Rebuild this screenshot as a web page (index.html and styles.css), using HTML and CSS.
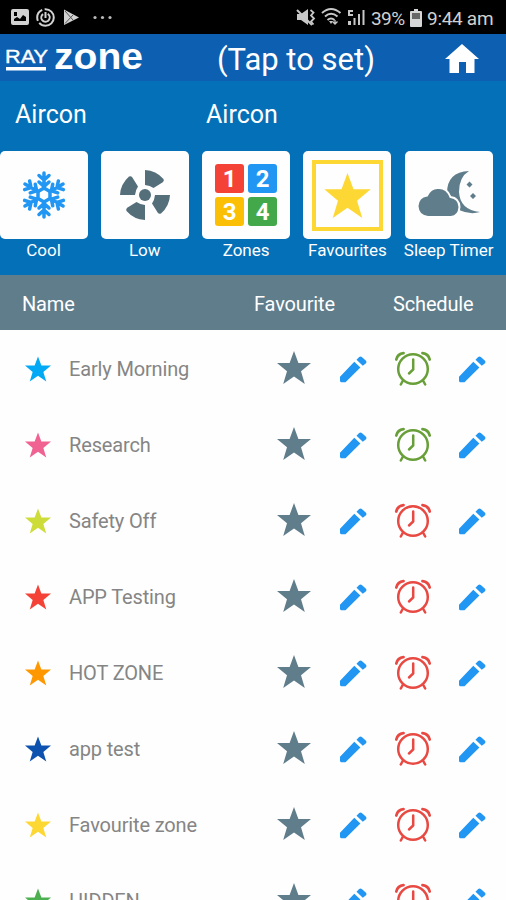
FILE: index.html
```html
<!DOCTYPE html>
<html lang="en">
<head>
<meta charset="utf-8">
<title>RAY zone</title>
<link rel="stylesheet" href="styles.css">
</head>
<body>
<svg class="defs" width="0" height="0">
  <symbol id="star" viewBox="0 0 34 33"><path d="M17 0L21.400 12H34L24 20.300L27.800 33L17 25.400L6.200 33L10 20.300L0 12H12.600Z"/></symbol>
  <symbol id="pencil" viewBox="0 0 27 27"><path d="M0 20.700L14.300 5.800L20.400 11.500L5.500 26.300H1L0 25.300ZM16.500 3.800L19.200 1Q20.500 0 21.800 1L26 4.700Q27 6 26 7.200L22.800 9.700Z"/></symbol>
  <symbol id="alarm" viewBox="0 0 40 40"><g fill="none" stroke="currentColor" stroke-width="2.500" stroke-linecap="round"><circle cx="20" cy="20" r="14.800"/><path d="M20.200 10.500V20.500L16 24.500M10 31.500L7.800 35.500M30 31.500L32.200 35.500"/><path d="M3.300 10.500Q4.500 5 10.500 4.200M36.700 10.500Q35.500 5 29.500 4.200" stroke-width="2.800"/></g></symbol>
</svg>
<div class="status">
  <svg class="s-left" width="130" height="34" viewBox="0 0 130 34">
    <path fill="#d2d2d2" fill-rule="evenodd" d="M13 9h14q2 0 2 2v12q0 2-2 2H13q-2 0-2-2V11q0-2 2-2ZM14 21h12v-4l-3-2-3 4-3-2-3 2ZM14 12v4h3v-4Z"/>
    <g fill="none" stroke="#d2d2d2" stroke-width="2"><circle cx="45.500" cy="17.500" r="8.300" stroke-dasharray="20 2.500 13 2.500"/><circle cx="45.500" cy="17.500" r="4.200" stroke-dasharray="21 6" transform="rotate(-58 45.500 17.500)"/><path d="M45.500 12v6"/></g>
    <path fill="#d2d2d2" d="M64 9.500L79 17.500L64 25Z"/><path d="M65 11L73 20M65 23.500L73 15" stroke="#555" stroke-width="1"/>
    <g fill="#b9b9b9"><circle cx="95" cy="17.500" r="1.600"/><circle cx="102.500" cy="17.500" r="1.600"/><circle cx="110" cy="17.500" r="1.600"/></g>
  </svg>
  <svg class="s-right" width="78" height="34" viewBox="0 0 78 34">
    <g fill="none" stroke="#c8c8c8" stroke-width="2"><path d="M1 10L16 25"/><path d="M14.500 10l3 2.500-2.500 3 3 3-3 3 2.500 3" stroke-width="1.800"/><path d="M26 13Q35 5 44.500 13M29 16.500Q35 11 41.500 16.500M31.500 20Q35 17 38.500 20"/><path d="M39 20v3.500M36.500 21.500l2.500 2.500 2.500-2.500" stroke-width="1.300"/></g>
    <path fill="#c8c8c8" d="M1 14h4l7-5v16l-7-5H1ZM33 21h4l-2 3ZM52 21h3v4h-3ZM57.500 18h2v7h-2ZM62 14h2v11H62ZM66.500 10h2v15h-2ZM52 10h5v2h-3v2h3v2h-5Z"/>
  </svg>
  <span class="pct">39%</span>
  <svg class="batt" width="12" height="18" viewBox="0 0 12 18"><path fill="#d6d6d6" d="M4 0h4v2h3q1 0 1 1v14q0 1-1 1H1q-1 0-1-1V3q0-1 1-1h3Z"/><path fill="#666" d="M2 4h8v6H2Z"/></svg>
  <span class="time">9:44 am</span>
</div>
<header class="bar">
  <svg class="logo" width="150" height="47" viewBox="0 0 150 47">
    <g fill="#fff" font-family="Liberation Sans, sans-serif"><text x="5" y="28" font-size="19" textLength="43" lengthAdjust="spacingAndGlyphs" stroke="#fff" stroke-width=".4">RAY</text><text x="54" y="34" font-size="37" font-weight="700" textLength="89" lengthAdjust="spacingAndGlyphs">zone</text><path d="M6 32h40v3.500H6Z"/></g>
  </svg>
  <h1 class="title">(Tap to set)</h1>
  <svg class="home" width="34" height="30" viewBox="0 0 34 30"><path fill="#fff" d="M17 0L34 15H29.500V29H21V18H14V29H4.500V15H0Z"/></svg>
</header>
<section class="panel">
  <div class="captions"><span class="caption">Aircon</span><span class="caption">Aircon</span></div>
  <div class="tiles">
    <div class="item"><div class="tile">
      <svg width="88" height="88" viewBox="-44 -44 88 88"><g fill="none" stroke="#2196f3" stroke-width="3.500" stroke-linecap="round" stroke-linejoin="round">
        <g id="arm"><path d="M0-7V-22M-5-19.500L0-15L5-19.500M-5-13L0-8.500L5-13"/></g>
        <use href="#arm" transform="rotate(60)"/><use href="#arm" transform="rotate(120)"/><use href="#arm" transform="rotate(180)"/><use href="#arm" transform="rotate(240)"/><use href="#arm" transform="rotate(300)"/><path d="M0-7L6-3.500V3.500L0 7L-6 3.500V-3.500Z"/></g></svg>
    </div><span class="label cool">Cool</span></div>
    <div class="item"><div class="tile">
      <svg width="88" height="88" viewBox="-44 -44 88 88"><g fill="#546e7a"><circle r="6"/><path id="blade" d="M0-25Q11-24.500 18.500-16Q19.500-14 17.800-12.800L8.500-7Q5-9.500 0-10Z"/><use href="#blade" transform="rotate(90)"/><use href="#blade" transform="rotate(180)"/><use href="#blade" transform="rotate(270)"/></g></svg>
    </div><span class="label low">Low</span></div>
    <div class="item"><div class="tile"><div class="zones"><b class="red">1</b><b class="blue">2</b><b class="amber">3</b><b class="green">4</b></div></div><span class="label zn">Zones</span></div>
    <div class="item"><div class="tile"><div class="frame"><svg width="47" height="45"><use href="#star"/></svg></div></div><span class="label fav">Favourites</span></div>
    <div class="item"><div class="tile">
      <svg width="88" height="88" viewBox="0 0 88 88"><path fill="#607d8b" d="M64 20Q42 21 42 42L54 59Q65 64 75 61Q55 59 54 41Q54 26 64 20Z"/><path fill="#607d8b" stroke="#fff" stroke-width="2" d="M23 66Q13 65 12.500 55Q13 46 22 44.500Q26 36 34 37Q42 37 45.500 46Q54 47 54.500 56Q54 65 46 66Z"/><path fill="#607d8b" d="M64.500 30.500l3 3-3 3-3-3ZM68 42l3 3-3 3-3-3Z"/></svg>
    </div><span class="label sleep">Sleep Timer</span></div>
  </div>
</section>
<div class="thead"><span class="h-name">Name</span><span class="h-fav">Favourite</span><span class="h-sch">Schedule</span></div>
<main class="list">
  <div class="row"><svg class="mark sky"><use href="#star"/></svg><span class="name">Early Morning</span><svg class="favstar"><use href="#star"/></svg><svg class="pencil"><use href="#pencil"/></svg><svg class="alarm on"><use href="#alarm"/></svg><svg class="pencil"><use href="#pencil"/></svg></div>
  <div class="row"><svg class="mark pink"><use href="#star"/></svg><span class="name">Research</span><svg class="favstar"><use href="#star"/></svg><svg class="pencil"><use href="#pencil"/></svg><svg class="alarm on"><use href="#alarm"/></svg><svg class="pencil"><use href="#pencil"/></svg></div>
  <div class="row"><svg class="mark lime"><use href="#star"/></svg><span class="name">Safety Off</span><svg class="favstar"><use href="#star"/></svg><svg class="pencil"><use href="#pencil"/></svg><svg class="alarm"><use href="#alarm"/></svg><svg class="pencil"><use href="#pencil"/></svg></div>
  <div class="row"><svg class="mark scarlet"><use href="#star"/></svg><span class="name">APP Testing</span><svg class="favstar"><use href="#star"/></svg><svg class="pencil"><use href="#pencil"/></svg><svg class="alarm"><use href="#alarm"/></svg><svg class="pencil"><use href="#pencil"/></svg></div>
  <div class="row"><svg class="mark orange"><use href="#star"/></svg><span class="name">HOT ZONE</span><svg class="favstar"><use href="#star"/></svg><svg class="pencil"><use href="#pencil"/></svg><svg class="alarm"><use href="#alarm"/></svg><svg class="pencil"><use href="#pencil"/></svg></div>
  <div class="row"><svg class="mark navy"><use href="#star"/></svg><span class="name">app test</span><svg class="favstar"><use href="#star"/></svg><svg class="pencil"><use href="#pencil"/></svg><svg class="alarm"><use href="#alarm"/></svg><svg class="pencil"><use href="#pencil"/></svg></div>
  <div class="row"><svg class="mark yellow"><use href="#star"/></svg><span class="name">Favourite zone</span><svg class="favstar"><use href="#star"/></svg><svg class="pencil"><use href="#pencil"/></svg><svg class="alarm"><use href="#alarm"/></svg><svg class="pencil"><use href="#pencil"/></svg></div>
  <div class="row"><svg class="mark leaf"><use href="#star"/></svg><span class="name">HIDDEN</span><svg class="favstar"><use href="#star"/></svg><svg class="pencil"><use href="#pencil"/></svg><svg class="alarm"><use href="#alarm"/></svg><svg class="pencil"><use href="#pencil"/></svg></div>
</main>
</body>
</html>
```
FILE: styles.css
```css
* { box-sizing: border-box; }
body { margin: 0; width: 506px; height: 900px; overflow: hidden; display: flex; flex-direction: column; background: #fefefe; font-family: Roboto, sans-serif; }
svg { display: block; flex: none; }
.defs { display: none; }
.status { height: 34px; flex: none; display: flex; align-items: center; background: #000; color: #d0d0d0; font-size: 19px; white-space: nowrap; }
.s-right { margin-left: 166px; }
.pct { width: 39px; margin-left: -3px; letter-spacing: -.6px; transform: translateY(.5px); }
.batt { margin-top: 1px; }
.time { margin-left: 5px; letter-spacing: -.3px; transform: translateY(.5px); }
.bar { height: 47px; flex: none; display: flex; background: #0d5fb2; color: #fff; }
.logo { margin-top: 1px; }
.title { margin: 0; width: 228px; padding-left: 67px; font-size: 31px; line-height: 52px; font-weight: 400; white-space: nowrap; }
.home { margin: 9.500px 0 0 67px; }
.panel { height: 194px; flex: none; background: #0470b8; color: #fff; }
.captions { display: grid; grid-template-columns: 191px 1fr; padding-left: 15px; height: 70px; line-height: 67px; font-size: 25px; }
.tiles { display: flex; gap: 13.300px; margin-left: -.5px; }
.item { width: 88px; display: flex; flex-direction: column; align-items: center; }
.tile { width: 88px; height: 88px; border-radius: 5px; background: #fefefe; display: flex; align-items: center; justify-content: center; }
.label { font-size: 17px; line-height: 23px; white-space: nowrap; }
.zones { display: grid; grid-template-columns: 29px 29px; gap: 4px; }
.zones b { height: 29px; border-radius: 3px; text-align: center; font-size: 24px; line-height: 30px; }
.red { background: #f44336; }
.blue { background: #2196f3; }
.amber { background: #fbc005; }
.green { background: #43a84a; }
.frame { width: 71px; height: 71px; border: 4px solid #fdd835; color: #fdd835; fill: currentColor; display: flex; align-items: center; justify-content: center; }
.thead { height: 55px; flex: none; display: grid; grid-template-columns: 232px 139px 1fr; padding-left: 22px; line-height: 58px; background: #607d8b; color: #fff; font-size: 20px; letter-spacing: -.15px; }
.list { padding-top: 1px; }
.row { height: 76px; display: grid; grid-template-columns: 44px 208px 62.500px 53.500px 66px 27px; padding-left: 25px; align-items: center; }
.name { font-size: 20px; letter-spacing: -.15px; color: #858585; white-space: nowrap; margin-top: -1px; }
.mark { width: 26px; height: 26px; fill: currentColor; margin-top: -1px; }
.favstar { width: 34px; height: 33px; fill: #607d8b; margin-top: -3px; }
.pencil { width: 27px; height: 27px; fill: #2196f3; }
.alarm { width: 40px; height: 40px; color: #e84a43; margin-top: -1px; }
.alarm.on { color: #689f38; }
.sky { color: #03a9f4; }
.pink { color: #f06292; }
.lime { color: #cddc39; }
.scarlet { color: #f44336; }
.orange { color: #ff9800; }
.navy { color: #0d52ae; }
.yellow { color: #fdd835; }
.leaf { color: #4caf50; }
```
